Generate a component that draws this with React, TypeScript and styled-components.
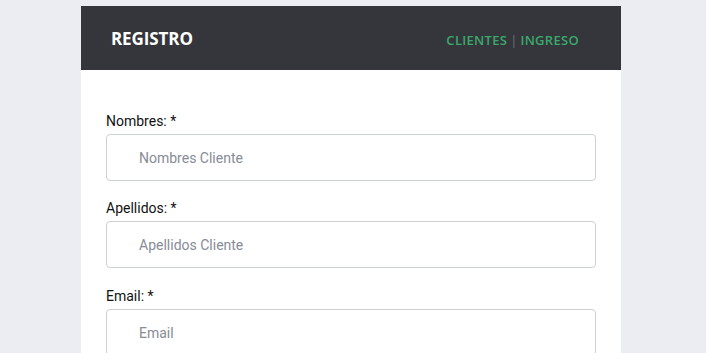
import styled, { createGlobalStyle } from 'styled-components'

const GlobalStyle = createGlobalStyle`
    html, body {
        margin: 0;
        padding: 0;
        background: #ecedf2;
        font-family: Roboto, "Liberation Sans", sans-serif;
    }
`

type Field = {
    label: string
    placeholder: string
    type?: string
}

const fields: Field[] = [
    { label: 'Nombres:', placeholder: 'Nombres Cliente' },
    { label: 'Apellidos:', placeholder: 'Apellidos Cliente' },
    { label: 'Email:', placeholder: 'Email', type: 'email' },
]

function App() {
    return (
        <>
            <GlobalStyle />
            <Page>
                <Card>
                    <Header>
                        <Title>REGISTRO</Title>
                        <Nav>
                            <NavLink href="#">CLIENTES</NavLink>
                            <Sep>|</Sep>
                            <NavLink href="#">INGRESO</NavLink>
                        </Nav>
                    </Header>
                    <Form>
                        {fields.map((f) => (
                            <Group key={f.label}>
                                <Label>{f.label} *</Label>
                                <Input type={f.type ?? 'text'} placeholder={f.placeholder} />
                            </Group>
                        ))}
                    </Form>
                </Card>
            </Page>
        </>
    )
}

const Page = styled.div`
    display: flex;
    justify-content: flex-start;
    padding: 6px 0 0 81px;
    height: 353px;
    overflow: hidden;
    box-sizing: border-box;
`

const Card = styled.div`
    width: 540px;
    background: #ffffff;
`

const Header = styled.header`
    height: 64px;
    background: #35363b;
    display: flex;
    align-items: center;
    justify-content: space-between;
    padding: 0 42px 0 30px;
    box-sizing: border-box;
`

const Title = styled.h1`
    margin: 0;
    color: #ffffff;
    font-family: "Open Sans", sans-serif;
    font-weight: 700;
    font-size: 17px;
    letter-spacing: -0.1px;
    padding-top: 1px;
`

const Nav = styled.nav`
    display: flex;
    align-items: center;
    gap: 3px;
    font-family: "Open Sans", sans-serif;
    font-size: 13px;
    font-weight: 600;
    padding-top: 3px;
`

const NavLink = styled.a`
    color: #3aa86b;
    text-decoration: none;
    letter-spacing: 0.3px;
`

const Sep = styled.span`
    color: #6d6f75;
    font-weight: 400;
`

const Form = styled.form`
    padding: 43px 25px 0;
`

const Group = styled.div`
    margin-bottom: 19px;

    &:nth-child(2) {
        margin-bottom: 20px;
    }
`

const Label = styled.label`
    display: block;
    font-size: 14px;
    line-height: 17px;
    color: #111111;
    margin-bottom: 4px;
`

const Input = styled.input`
    display: block;
    width: 100%;
    height: 47px;
    box-sizing: border-box;
    border: 1px solid #cdd0d5;
    border-radius: 4px;
    padding: 0 32px;
    font-family: Roboto, sans-serif;
    font-size: 14px;
    color: #333;
    outline: none;

    &::placeholder {
        color: #878c96;
    }
`

export default App
